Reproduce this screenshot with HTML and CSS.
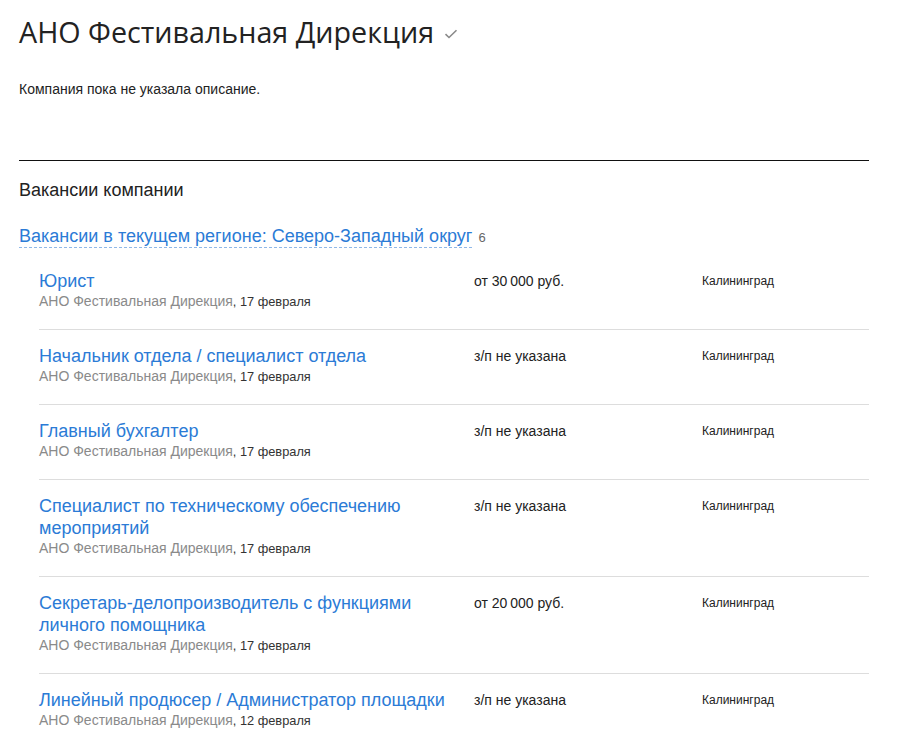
FILE: index.html
```html
<!DOCTYPE html>
<html lang="ru">
<head>
<meta charset="utf-8">
<title>АНО Фестивальная Дирекция</title>
<link rel="stylesheet" href="styles.css">
</head>
<body>
<div class="page">
  <h1 class="company-title">АНО Фестивальная Дирекция<svg class="verified" width="14" height="10" viewBox="0 0 14 10"><path d="M1.5 5.2 L5 8.5 L12.5 1.2" fill="none" stroke="#8a8a8a" stroke-width="1.6"/></svg></h1>
  <p class="description">Компания пока не указала описание.</p>
  <div class="divider"></div>
  <h2 class="section-title">Вакансии компании</h2>
  <div class="region"><span class="region-link">Вакансии в текущем регионе: Северо-Западный округ</span><span class="region-count">6</span></div>
  <div class="vacancies">
    <div class="vacancy">
      <div class="v-main">
        <a class="v-title">Юрист</a>
        <div class="v-meta"><span class="v-company">АНО Фестивальная Дирекция</span>, 17 февраля</div>
      </div>
      <div class="v-salary">от 30&#8201;000 руб.</div>
      <div class="v-city">Калининград</div>
    </div>
    <div class="vacancy">
      <div class="v-main">
        <a class="v-title">Начальник отдела / специалист отдела</a>
        <div class="v-meta"><span class="v-company">АНО Фестивальная Дирекция</span>, 17 февраля</div>
      </div>
      <div class="v-salary">з/п не указана</div>
      <div class="v-city">Калининград</div>
    </div>
    <div class="vacancy">
      <div class="v-main">
        <a class="v-title">Главный бухгалтер</a>
        <div class="v-meta"><span class="v-company">АНО Фестивальная Дирекция</span>, 17 февраля</div>
      </div>
      <div class="v-salary">з/п не указана</div>
      <div class="v-city">Калининград</div>
    </div>
    <div class="vacancy">
      <div class="v-main">
        <a class="v-title">Специалист по техническому обеспечению мероприятий</a>
        <div class="v-meta"><span class="v-company">АНО Фестивальная Дирекция</span>, 17 февраля</div>
      </div>
      <div class="v-salary">з/п не указана</div>
      <div class="v-city">Калининград</div>
    </div>
    <div class="vacancy">
      <div class="v-main">
        <a class="v-title">Секретарь-делопроизводитель с функциями личного помощника</a>
        <div class="v-meta"><span class="v-company">АНО Фестивальная Дирекция</span>, 17 февраля</div>
      </div>
      <div class="v-salary">от 20&#8201;000 руб.</div>
      <div class="v-city">Калининград</div>
    </div>
    <div class="vacancy">
      <div class="v-main">
        <a class="v-title">Линейный продюсер / Администратор площадки</a>
        <div class="v-meta"><span class="v-company">АНО Фестивальная Дирекция</span>, 12 февраля</div>
      </div>
      <div class="v-salary">з/п не указана</div>
      <div class="v-city">Калининград</div>
    </div>
  </div>
</div>
</body>
</html>
```
FILE: styles.css
```css
* { box-sizing: border-box; }
html, body { margin: 0; padding: 0; background: #fff; }
body {
  font-family: "Liberation Sans", Arial, sans-serif;
  color: #222;
}
.page {
  width: 869px;
  padding-left: 19px;
}
.company-title {
  margin: 0;
  padding-top: 12px;
  font-family: "Open Sans", "Liberation Sans", sans-serif;
  font-weight: 400;
  font-size: 28.7px;
  line-height: 40px;
  color: #222;
  display: flex;
  align-items: center;
}
.verified {
  margin-left: 10px;
  margin-top: 4px;
}
.description {
  margin: 28px 0 0;
  font-size: 14px;
  line-height: 18px;
}
.divider {
  margin-top: 62px;
  border-top: 1px solid #111;
}
.section-title {
  margin: 18px 0 0;
  font-weight: 400;
  font-size: 18px;
  line-height: 22px;
  color: #222;
}
.region {
  margin-top: 24px;
  display: flex;
  align-items: baseline;
}
.region-link {
  font-size: 18px;
  line-height: 22px;
  color: #2b7bd6;
  border-bottom: 1px dashed #8fb8e8;
}
.region-count {
  margin-left: 6px;
  font-size: 13px;
  color: #666;
}
.vacancies {
  margin-top: 7px;
  padding-left: 20px;
}
.vacancy {
  display: grid;
  grid-template-columns: 435px 228px 1fr;
  padding: 15px 0 17px;
  border-bottom: 1px solid #ddd;
}
.vacancy:last-child { border-bottom: none; }
.v-title {
  display: block;
  font-size: 18px;
  line-height: 22px;
  color: #2b7bd6;
}
.v-meta {
  height: 20px;
  font-size: 12.8px;
  line-height: 20px;
  color: #333;
}
.v-company {
  font-size: 14px;
  line-height: 18px;
  color: #8a8a8a;
}
.v-salary {
  font-size: 14px;
  line-height: 22px;
  color: #222;
}
.v-city {
  font-size: 12px;
  line-height: 22px;
  color: #222;
}
```
